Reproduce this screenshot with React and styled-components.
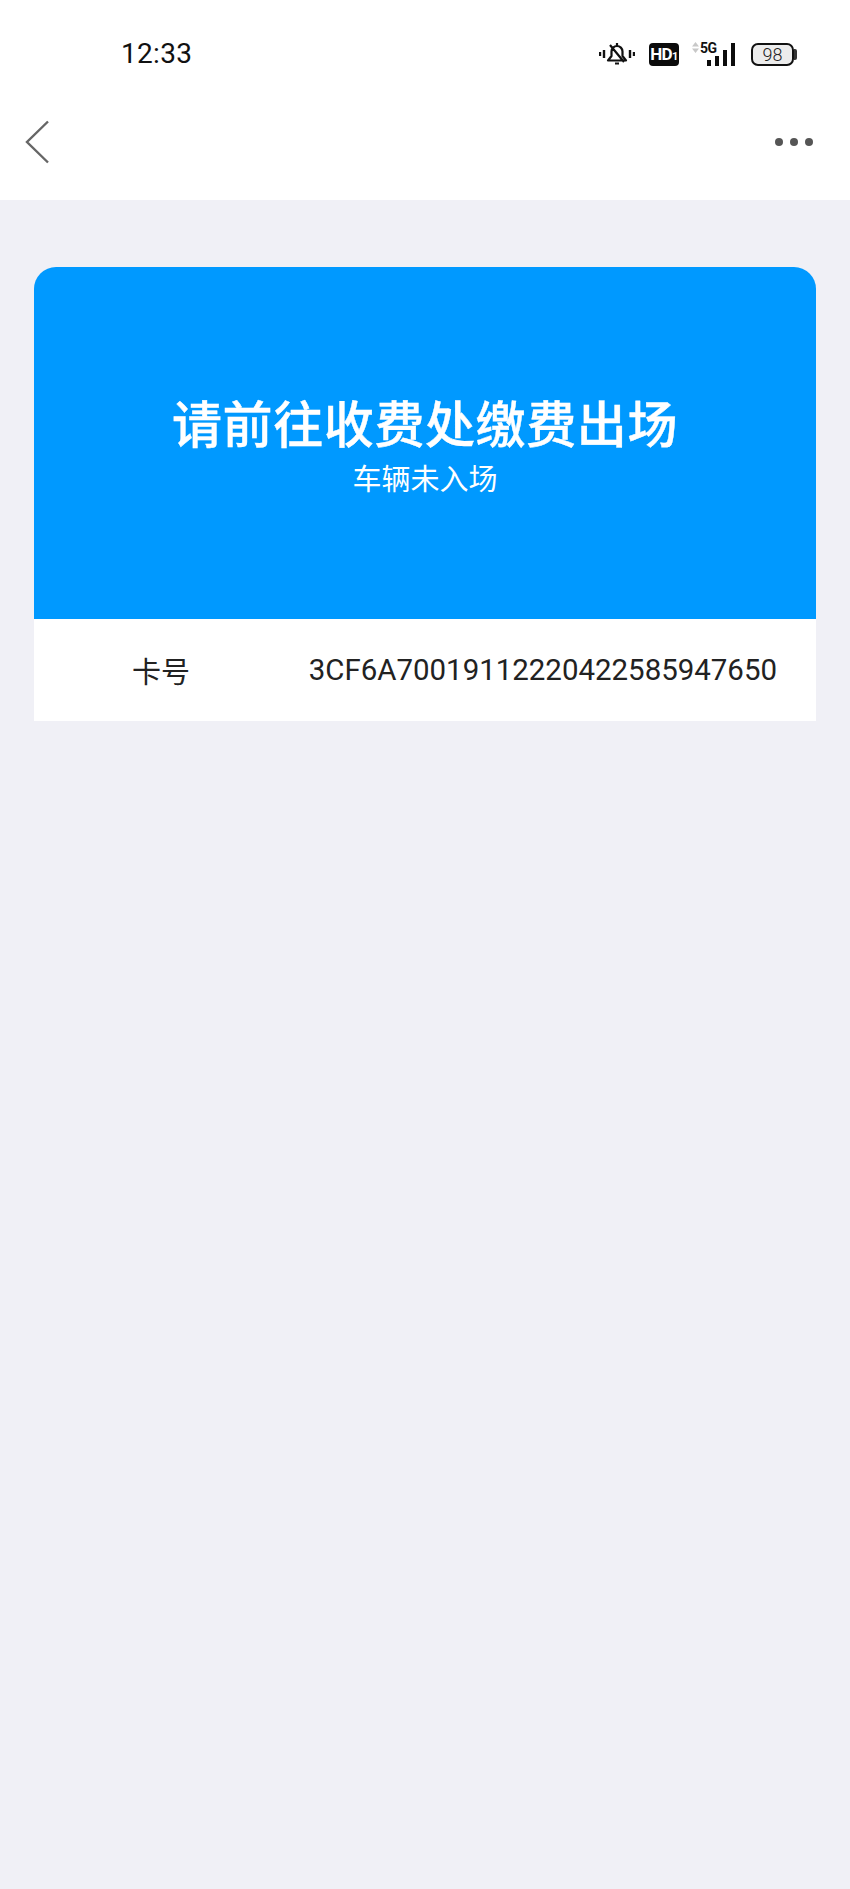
import React from "react";
import styled, { createGlobalStyle } from "styled-components";

const Global = createGlobalStyle`
  html, body { margin: 0; padding: 0; background: #f0f0f6; }
  body { font-family: "Roboto", "Noto Sans CJK SC", sans-serif; }
`;

const Page = styled.div`
  min-height: 1889px;
  background: #f0f0f6;
  display: flex;
  flex-direction: column;
`;

const Top = styled.header`
  background: #fff;
`;

const StatusBar = styled.div`
  height: 84px;
  box-sizing: border-box;
  padding: 24px 53px 0 121px;
  display: flex;
  align-items: center;
  justify-content: space-between;
`;

const Clock = styled.span`
  font-size: 28px;
  line-height: 30px;
  color: #111;
  letter-spacing: 0.3px;
`;

const Indicators = styled.div`
  display: flex;
  align-items: center;
`;

const HdBadge = styled.span`
  width: 30px;
  height: 23px;
  margin-left: 14px;
  border-radius: 4px;
  background: #0b0b0b;
  color: #fff;
  font: 700 17px/23px "Roboto", sans-serif;
  letter-spacing: -0.6px;
  text-align: center;
`;

const HdSuffix = styled.span`
  font-size: 11px;
`;

const Signal = styled.div`
  position: relative;
  width: 45px;
  height: 24px;
  margin-left: 11px;
  display: flex;
  align-items: flex-end;
  justify-content: flex-end;
  gap: 4px;
`;

const FiveG = styled.span`
  position: absolute;
  left: 10px;
  top: -2px;
  font: 700 14px/16px "Roboto", sans-serif;
  letter-spacing: -0.5px;
  color: #111;
`;

const TrafficArrows = styled.svg`
  position: absolute;
  left: 2px;
  top: 0;
`;

const Bar = styled.i`
  display: block;
  width: 4px;
  height: ${(p) => p.$h}px;
  background: #0c0c0c;
`;

const Battery = styled.div`
  position: relative;
  width: 43px;
  height: 23px;
  margin-left: 16px;
  margin-right: 3px;
  box-sizing: border-box;
  border: 2px solid #111;
  border-radius: 7px;
  background: #ececec;
  color: #222;
  font-size: 18px;
  line-height: 19px;
  font-weight: 300;
  text-align: center;

  &::after {
    content: "";
    position: absolute;
    right: -5px;
    top: 4px;
    width: 3px;
    height: 11px;
    border-radius: 0 2px 2px 0;
    background: #333;
  }
`;

const NavBar = styled.nav`
  height: 116px;
  box-sizing: border-box;
  padding: 0 37px 0 25px;
  display: flex;
  align-items: center;
  justify-content: space-between;
`;

const Dots = styled.div`
  display: flex;
  gap: 7px;
`;

const Dot = styled.i`
  display: block;
  width: 8px;
  height: 8px;
  border-radius: 50%;
  background: #555;
`;

const Main = styled.main`
  padding: 67px 34px 0;
`;

const Hero = styled.section`
  height: 352px;
  box-sizing: border-box;
  padding-top: 128px;
  border-radius: 22px 22px 0 0;
  background: #0099ff;
  color: #fff;
  text-align: center;
`;

const Title = styled.h1`
  margin: 0;
  font: 500 50px/52px "Noto Sans CJK SC", sans-serif;
  -webkit-text-stroke: 0.4px #fff;
  letter-spacing: 0.6px;
`;

const Subtitle = styled.p`
  margin: 12px 0 0;
  font: 400 29px/36px "Noto Sans CJK SC", sans-serif;
`;

const InfoRow = styled.div`
  height: 102px;
  box-sizing: border-box;
  padding: 0 39px 0 98px;
  background: #fff;
  color: #222;
  display: flex;
  align-items: center;
  justify-content: space-between;
  white-space: nowrap;
`;

const InfoLabel = styled.span`
  font: 400 29px/36px "Noto Sans CJK SC", sans-serif;
`;

const InfoValue = styled.span`
  font: 400 29.45px/36px "Roboto", sans-serif;
`;

const MutedBell = () => (
  <svg width="36" height="24" viewBox="0 0 36 24" fill="none" stroke="#111">
    <path d="M1 10v4M5 8v8M31 8v8M35 10v4" strokeWidth="2.4" />
    <path
      d="M9 18.5h18l-3.5-4.5V9.5a5.5 5.5 0 0 0-11 0V14L9 18.5zM11 3l14 17M16 21.5h4M18 1v3"
      strokeWidth="2.2"
      strokeLinejoin="round"
    />
  </svg>
);

const BackChevron = () => (
  <svg width="24" height="44" viewBox="0 0 24 44" fill="none">
    <path d="M23 1.5 2 22l21 20.5" stroke="#666" strokeWidth="2.4" />
  </svg>
);

export default function App() {
  return (
    <Page>
      <Global />
      <Top>
        <StatusBar>
          <Clock>12:33</Clock>
          <Indicators>
            <MutedBell />
            <HdBadge>
              HD<HdSuffix>1</HdSuffix>
            </HdBadge>
            <Signal>
              <TrafficArrows width="7" height="11" viewBox="0 0 7 11" fill="#c8c8c8">
                <path d="M3.5 0 7 4.5H0zM3.5 11 0 6.5h7z" />
              </TrafficArrows>
              <FiveG>5G</FiveG>
              <Bar $h={6} />
              <Bar $h={10} />
              <Bar $h={16} />
              <Bar $h={23} />
            </Signal>
            <Battery>98</Battery>
          </Indicators>
        </StatusBar>
        <NavBar>
          <BackChevron />
          <Dots>
            <Dot />
            <Dot />
            <Dot />
          </Dots>
        </NavBar>
      </Top>
      <Main>
        <Hero>
          <Title>请前往收费处缴费出场</Title>
          <Subtitle>车辆未入场</Subtitle>
        </Hero>
        <InfoRow>
          <InfoLabel>卡号</InfoLabel>
          <InfoValue>3CF6A70019112220422585947650</InfoValue>
        </InfoRow>
      </Main>
    </Page>
  );
}
